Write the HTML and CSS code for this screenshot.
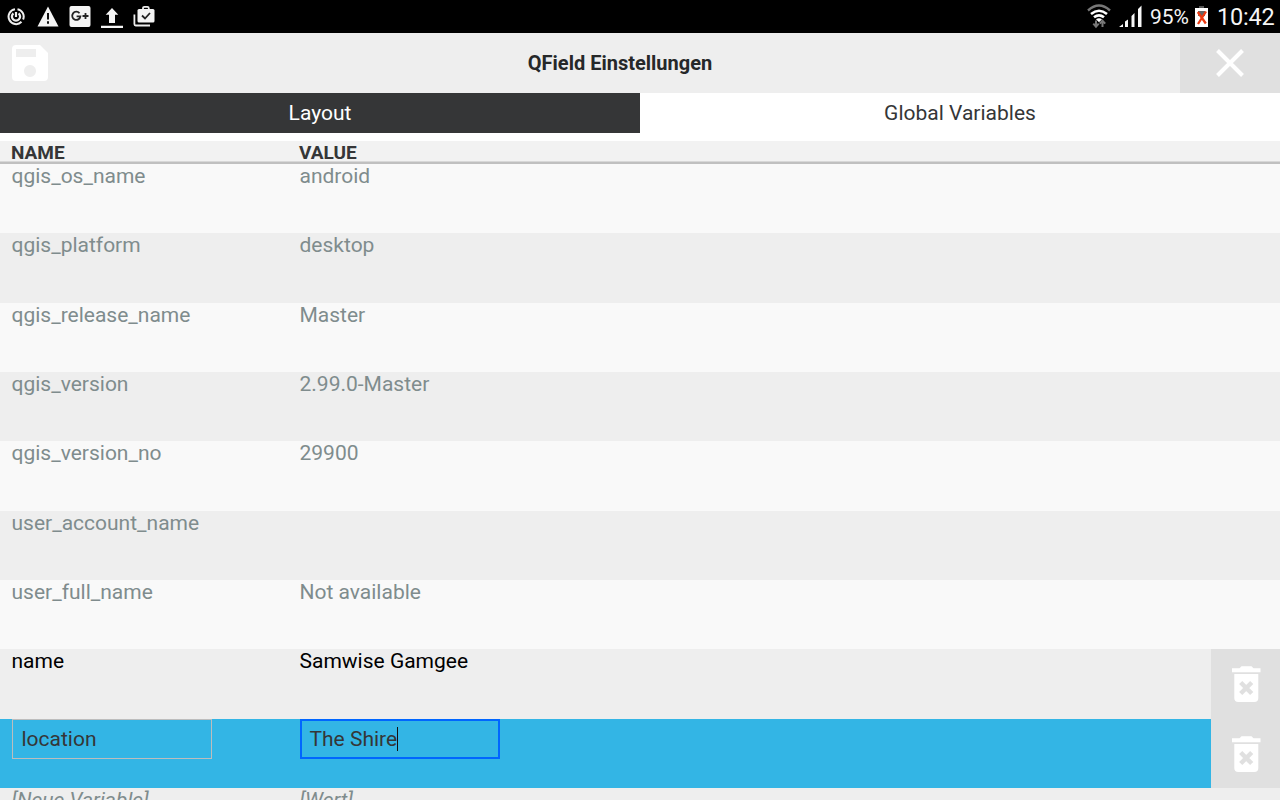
FILE: index.html
```html
<!DOCTYPE html>
<html lang="de">
<head>
<meta charset="utf-8">
<title>QField Einstellungen</title>
<link rel="stylesheet" href="styles.css">
</head>
<body>
<div class="status">
  <div class="notices">
    <svg width="20" height="24" viewBox="0 0 20 24" fill="none" stroke="#eee"><path d="M8 5.200A7.500 7.500 0 1 0 14.500 17.800M16.100 15.500A7.500 7.500 0 0 0 10.500 5.200" stroke-width="2"/><path d="M6.400 9.300A4.100 4.100 0 1 0 11.600 9.300" stroke-width="2.300"/><path d="M9 8v5" stroke-width="2.200"/></svg>
    <svg width="22" height="24" viewBox="0 0 22 24"><path d="M11 2.500 21.500 22.500H.5Z" fill="#f4f4f4"/><path d="M11 9v6.500M11 17.300v2.400" stroke="#111" stroke-width="2"/></svg>
    <svg width="22" height="24" viewBox="0 0 22 24"><rect x=".5" y="2" width="21" height="21" rx="2" fill="#f4f4f4"/><path d="M10.500 9.200A4.100 4.100 0 1 0 11.400 12.400H7.600M13.500 12h6M16.500 9v6" fill="none" stroke="#222" stroke-width="1.800"/></svg>
    <svg width="22" height="24" viewBox="0 0 22 24" fill="#f4f4f4"><path d="M11 4l6.300 6.800h-3.300V19H8v-8.200H4.700ZM0 21.700h22v2.300H0Z"/></svg>
    <svg width="22" height="24" viewBox="0 0 22 24"><path d="M1.400 10.500V20q0 1.500 1.300 1.500H17" fill="none" stroke="#eee" stroke-width="1.800"/><path d="M10 6V4.200q0-1.400 1.400-1.400h3q1.400 0 1.400 1.400V6" fill="none" stroke="#eee" stroke-width="1.800"/><rect x="4.500" y="5" width="17" height="13.500" rx="1.500" fill="#f4f4f4"/><path d="M9 11.500l3 3 5-5.500" fill="none" stroke="#222" stroke-width="1.800"/></svg>
  </div>
  <div class="system">
    <svg class="wifi" width="24" height="26" viewBox="0 0 24 26" fill="none"><path d="M1 7.500Q12-2.500 23 7.500" stroke="#777" stroke-width="2.400"/><path d="M4 11q8-6.500 16 0M7 14.300q5-4 10 0" stroke="#fff" stroke-width="2.600"/><path d="M9 16.300q3-2 6 0l-3 3Z" fill="#fff"/><path d="M9 17.500V24M6.300 20.700 9 23.700l2.700-3M15.500 24v-6.500m-2.700 3.200 2.700-3 2.700 3" stroke="#777" stroke-width="2"/></svg>
    <svg class="signal" width="23" height="22" viewBox="0 0 23 22" fill="#f7f7f7"><path d="M0 22l4-3v3ZM6 22v-5.500l3-2V22ZM12.500 22V11l3-3v14ZM19 22V4l3.500-3.500V22Z"/></svg>
    <span class="percent">95%</span>
    <svg class="battery" width="13" height="21" viewBox="0 0 13 21"><path d="M4 0h5v2H4Z" fill="#555"/><path d="M0 2h13v19H0Z" fill="#fff"/><path d="M3 5h7v5H3Z" fill="#666"/><path d="M2.800 6l8 11.500M11 5.500 3 18" stroke="#ed3b12" stroke-width="2.300"/></svg>
    <time class="clock">10:42</time>
  </div>
</div>
<header class="header">
  <div class="save"><svg width="36" height="36" viewBox="0 0 36 36"><path fill="#fff" fill-rule="evenodd" d="M4 0h24l8 8v24q0 4-4 4H4q-4 0-4-4V4q0-4 4-4ZM4 4v8h20V4ZM18 20a6 6 0 1 0 .01 0Z"/></svg></div>
  <h1 class="title">QField Einstellungen</h1>
  <div class="close"><svg width="28" height="28" viewBox="0 0 28 28"><path d="M1.500 1.500l25 25m0-25-25 25" stroke="#fff" stroke-width="4"/></svg></div>
</header>
<nav class="tabs"><div class="tab selected">Layout</div><div class="tab">Global Variables</div></nav>
<div class="table-head"><span>NAME</span><span>VALUE</span></div>
<main class="rows">
  <div class="row"><span>qgis_os_name</span><span>android</span></div>
  <div class="row"><span>qgis_platform</span><span>desktop</span></div>
  <div class="row"><span>qgis_release_name</span><span>Master</span></div>
  <div class="row"><span>qgis_version</span><span>2.99.0-Master</span></div>
  <div class="row"><span>qgis_version_no</span><span>29900</span></div>
  <div class="row"><span>user_account_name</span><span></span></div>
  <div class="row"><span>user_full_name</span><span>Not available</span></div>
  <div class="row custom"><span>name</span><span>Samwise Gamgee</span><div class="delete"><svg width="30" height="38" viewBox="0 0 30 38"><path fill="#fff" d="M1 3.300h7.500l2-2h10l2 2H29.500V7.300H1ZM3.300 9h24v24q0 4-4 4h-16q-4 0-4-4Z"/><path d="M9.700 17.500l11 11m0-11-11 11" stroke="#e0e0e0" stroke-width="4.500"/></svg></div></div>
  <div class="row editing"><span class="field">location</span><span class="field focused">The Shire<i class="caret"></i></span><div class="delete"><svg width="30" height="38" viewBox="0 0 30 38"><path fill="#fff" d="M1 3.300h7.500l2-2h10l2 2H29.500V7.300H1ZM3.300 9h24v24q0 4-4 4h-16q-4 0-4-4Z"/><path d="M9.700 17.500l11 11m0-11-11 11" stroke="#e0e0e0" stroke-width="4.500"/></svg></div></div>
  <div class="row placeholder"><span>[Neue Variable]</span><span>[Wert]</span></div>
</main>
</body>
</html>
```
FILE: styles.css
```css
* { box-sizing: border-box; }
body { margin: 0; height: 800px; overflow: hidden; display: flex; flex-direction: column; background: #fff; color: #353637; font-family: Roboto, sans-serif; font-size: 21px; }
svg { display: block; flex: none; }
.status { height: 33px; flex: none; display: flex; justify-content: space-between; background: #000; color: #f5f5f5; }
.notices { display: flex; padding: 4px 0 0 7px; gap: 10px; }
.system { display: flex; align-items: flex-start; padding-right: 6px; line-height: 33px; }
.wifi { margin: 3px 8px 0 0; }
.signal { margin: 5px 8px 0 0; }
.percent { width: 39px; font-size: 21px; letter-spacing: -0.1px; margin-top: 1px; }
.battery { margin: 6px 9px 0 6px; }
.clock { width: 57px; font-size: 23.5px; letter-spacing: -0.2px; margin-top: 1px; }
.header { height: 60px; flex: none; display: grid; grid-template-columns: 60px 1fr 100px; background: #eee; }
.save { padding: 12px; }
.title { margin: 0; font-size: 20px; font-weight: 700; line-height: 60px; text-align: center; color: #262829; }
.close { display: grid; place-items: center; background: #e0e0e0; }
.tabs { display: flex; height: 40px; flex: none; margin-bottom: 8px; }
.tab { width: 50%; line-height: 40px; text-align: center; }
.selected { background: #353637; color: #fff; }
.table-head { display: grid; grid-template-columns: 288px 1fr; height: 23px; flex: none; padding-left: 11px; background: #f2f2f2; border-bottom: 2px solid #c0c0c0; box-shadow: inset 0 -1px #d8d8d8; font-size: 19px; font-weight: 700; line-height: 23px; }
.rows { flex: 1; min-height: 0; overflow: hidden; }
.row { display: grid; grid-template-columns: 288px 1fr 69px; height: 69.333px; padding-left: 12px; background: #f9f9f9; color: #7f8c8d; line-height: 24px; }
.row > span:not(.field) { margin-left: -0.5px; }
.row:nth-child(even) { background: #eee; }
.row.custom { color: #000; }
.row.editing { background: #33b5e5; color: #353637; }
.delete { display: grid; place-items: center; padding-top: 1px; background: #e0e0e0; }
.field { display: flex; align-items: center; width: 200px; height: 40px; padding: 0 8.5px; border: 1px solid #bdbdbd; }
.focused { border: 2px solid #06f; padding: 0 7.5px; }
.caret { width: 1px; height: 24px; background: #111; }
.row.placeholder { font-style: italic; }
```
